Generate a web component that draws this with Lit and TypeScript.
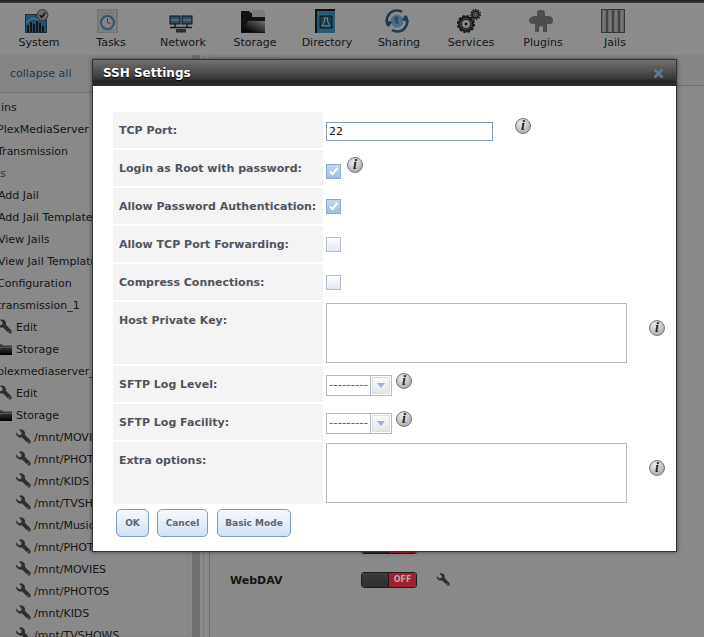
import { LitElement, html, css, svg } from "lit";
import { customElement } from "lit/decorators.js";

const wrench = (size: number) => html`<svg class="tico" width=${size} height=${size} viewBox="0 0 16 16">
  <path d="M1 3.600 3.900 6.300 6.200 5.700 6.700 3.400 4 .8C5.800 0 7.800.4 9 1.700c1 1.100 1.300 2.700.8 4.100l5.200 5.300c.9.9.9 2 .2 2.800-.8.8-2 .7-2.800-.1L7 8.500c-1.600.4-3.300 0-4.600-1.200C1.200 6.200.7 4.900 1 3.600z" fill="#555"/>
  <circle cx="13.200" cy="12.700" r="1" fill="#aaa"/></svg>`;

const folder = html`<svg class="tico" width="16" height="12" viewBox="0 0 16 12">
  <defs><linearGradient id="fg" x1="0" y1="0" x2="0" y2="1"><stop offset="0" stop-color="#888"/><stop offset="1" stop-color="#000"/></linearGradient></defs>
  <path d="M0 1h6l1 1.500h9V12H0z" fill="url(#fg)"/><path d="M0 10 3 4h13v1H5L2 11z" fill="#ddd" opacity=".5"/></svg>`;

type Row = { t: string; k: string };
const rows: Row[] = [
  { t: "ins", k: "first" }, { t: "PlexMediaServer", k: "plain" }, { t: "Transmission", k: "plain" },
  { t: "s", k: "link" }, { t: "Add Jail", k: "sub" }, { t: "Add Jail Templates", k: "sub" },
  { t: "View Jails", k: "sub" }, { t: "View Jail Templates", k: "sub" }, { t: "Configuration", k: "plain" },
  { t: "transmission_1", k: "plain" }, { t: "Edit", k: "edit" }, { t: "Storage", k: "store" },
  { t: "plexmediaserver_1", k: "plain" }, { t: "Edit", k: "edit" }, { t: "Storage", k: "store" },
  { t: "/mnt/MOVIES", k: "mnt" }, { t: "/mnt/PHOTOS", k: "mnt" }, { t: "/mnt/KIDS", k: "mnt" },
  { t: "/mnt/TVSHOWS", k: "mnt" }, { t: "/mnt/Music", k: "mnt" }, { t: "/mnt/PHOTOS", k: "mnt" },
  { t: "/mnt/MOVIES", k: "mnt" }, { t: "/mnt/PHOTOS", k: "mnt" }, { t: "/mnt/KIDS", k: "mnt" },
  { t: "/mnt/TVSHOWS", k: "mnt" },
];

const navIcons: Record<string, unknown> = {
  System: svg`<rect x=".5" y="5.500" width="21" height="18" fill="#3a9ad6" stroke="#33556e"/>
    <path d="M2 23v-7h2v7zM5 23v-10h2v10zM8 23v-8h2v8zM11 23v-11h2v11zM14 23v-9h2v9zM17 23v-6h2v6z" fill="#2a2a2a"/>
    <path d="M1 14 7 9l5 2 8-6" stroke="#cfe6f4" fill="none"/>
    <circle cx="17.500" cy="6" r="5.500" fill="#c4c4c4" stroke="#666"/>
    <path d="M14.700 6l2 2.200L20.300 3.800" stroke="#222" stroke-width="1.600" fill="none"/>`,
  Tasks: svg`<rect x="1" y="1" width="19" height="23" fill="#f0f0f0" stroke="#bbb"/>
    <path d="M4 4h13M4 7h13M4 21h13" stroke="#ccc"/>
    <circle cx="10.500" cy="13.500" r="6.500" fill="#f6f6f6" stroke="#5f9ccf" stroke-width="2.200"/>
    <path d="M10.500 9.500v4l3 1" stroke="#c45" fill="none"/>`,
  Network: svg`<rect x="1" y="7" width="10" height="8" fill="#4a8fbf" stroke="#222"/>
    <rect x="13" y="7" width="10" height="8" fill="#4a8fbf" stroke="#222"/>
    <path d="M2 11h8M14 11h8" stroke="#d4e6f2"/>
    <path d="M6 15v3M18 15v3M1 18.500h22" stroke="#333" stroke-width="1.500"/>
    <rect x="7" y="20" width="10" height="3.500" fill="#555"/>`,
  Storage: svg`<path d="M0 2h8l2 2h14v20H0z" fill="#222"/>
    <path d="M11 1h11l2 2v5H11z" fill="#e4e4e4"/>
    <path d="M1 23 7 12h17v11z" fill="url(#sg)"/>
    <defs><linearGradient id="sg" x1="0" y1="1" x2="1" y2="0"><stop offset=".2" stop-color="#111"/><stop offset="1" stop-color="#c8c8c8"/></linearGradient></defs>`,
  Directory: svg`<rect x="2" y="0" width="20" height="24" fill="#222"/>
    <rect x="4" y="2" width="18" height="22" fill="#4aa8d8"/>
    <rect x="7" y="7" width="12" height="12" fill="#2e7299" stroke="#222"/>
    <path d="M11.500 9v3l-2.500 5h8l-2.500-5V9M11 9h4" fill="none" stroke="#e8ffff" stroke-width="1"/>`,
  Sharing: svg`<circle cx="12" cy="12" r="6.500" fill="#92c6ee"/>
    <path d="M9 9l3-2 2 2-2 2 2 3-3 1-1-3z" fill="#4a8cc0"/>
    <path d="M3.500 17A10 10 0 0 1 12 1.500a10 10 0 0 1 5 1.300" fill="none" stroke="#376b9c" stroke-width="2.600"/>
    <path d="M20.500 7A10 10 0 0 1 12 22.500a10 10 0 0 1-5-1.300" fill="none" stroke="#376b9c" stroke-width="2.600"/>
    <path d="M0 11l4 7 3-5zM24 13l-4-7-3 5z" fill="#376b9c"/>`,
  Services: svg`<circle cx="9" cy="15" r="6" fill="none" stroke="#333" stroke-width="4"/>
    <circle cx="9" cy="15" r="7.800" fill="none" stroke="#333" stroke-width="2.600" stroke-dasharray="2.500 1.600"/>
    <circle cx="9" cy="15" r="5.500" fill="none" stroke="#888" stroke-width="1"/>
    <circle cx="9" cy="15" r="1.500" fill="#333"/>
    <circle cx="18.500" cy="5.500" r="3.500" fill="#888" stroke="#333" stroke-width="1.600"/>
    <circle cx="18.500" cy="5.500" r="4.800" fill="none" stroke="#333" stroke-width="1.500" stroke-dasharray="1.500 1.200"/>`,
  Plugins: svg`<path d="M8 4q0-3 3-3h2q3 0 3 3v3h3q5 0 5 4.500t-5 3.500h-1v8h-4v-4q0-2-2-2t-2 2v4H6v-8H5q-5 0-5-3.500T5 7h3z" fill="#8f8f8f"/>`,
  Jails: svg`<rect x=".5" y=".5" width="23" height="23" fill="#bdbdbd" stroke="#666"/>
    <path d="M6 1v22M12 1v22M18 1v22" stroke="#6a6a6a" stroke-width="1.500"/>
    <path d="M3 1v22M9 1v22M15 1v22M21 1v22" stroke="#eee" stroke-width="1"/>`,
};

@customElement("app-root")
export class AppRoot extends LitElement {
  static styles = css`
    :host { display: block; width: 704px; height: 637px; position: relative; overflow: hidden;
      background: #fff; font-family: "DejaVu Sans", Verdana, sans-serif; font-size: 11px; color: #2b2f36; }
    .topline { height: 3px; background: linear-gradient(#333, #777); }
    .nav { display: flex; height: 52px; padding-left: 2px; background: #fff; }
    .nav-item { width: 72px; display: flex; flex-direction: column; align-items: center; padding-top: 6px; box-sizing: border-box; color: #2b2f36; }
    .nav-item svg { display: block; width: 24px; height: 24px; margin-left: -2px; }
    .nav-item span { display: block; line-height: 14px; margin: 3px 0 0 2px; white-space: nowrap; }
    .content { display: flex; height: 582px; background: #f4f4f4; }
    .side { width: 188px; flex: none; overflow: hidden; }
    .collapse { height: 37px; line-height: 37px; padding-left: 10px; color: #3a6ea5; border-bottom: 1px solid #ccc; background: #f4f4f4; }
    .tree { padding-top: 3px; background: #fbfbfb; height: 540px; }
    .row { height: 22px; display: flex; align-items: center; white-space: nowrap; color: #2b2f36; }
    .row.first { margin-left: 1px; }
    .row.plain { margin-left: -3px; }
    .row.sub { margin-left: -2px; }
    .row.link { color: #3a6ea5; }
    .row.edit, .row.store { gap: 4px; margin-left: -4px; }
    .row.mnt { padding-left: 15px; gap: 3px; }
    .row .tico { flex: none; }
    .gutter { width: 22px; flex: none; display: flex; background: #fbfbfb; }
    .gutter i { display: block; flex: none; }
    .g0 { width: 1px; background: #f0f0f0; }
    .g1 { width: 3px; }
    .g2 { width: 8px; background: #cfcfcf; }
    .g3 { width: 3px; background: #fff; }
    .g4 { width: 1px; background: #ddd; }
    .g5 { width: 5px; }
    .g6 { width: 1px; background: #c8c8c8; }
    .main { flex: 1; }
    .tabs { height: 31px; box-sizing: border-box; border-bottom: 1px solid #ccc; padding-top: 2px; }
    .tab { width: 73px; height: 28px; box-sizing: border-box; border: 1px solid #e4e4e4; border-bottom: 0; border-radius: 4px 4px 0 0; background: #f8f8f8; }
    .pane { background: #fbfbfb; height: 551px; display: flex; flex-direction: column; justify-content: flex-end; gap: 18px; padding-bottom: 49px; box-sizing: border-box; }
    .svc { display: flex; align-items: center; height: 16px; padding-left: 20px; }
    .svc b { width: 131px; font-size: 11px; color: #2a2a2a; }
    .toggle { width: 56px; height: 16px; box-sizing: border-box; border: 1px solid #1c1c1c; border-radius: 3px; display: flex; overflow: hidden; margin-right: 19px; position: relative; z-index: 1; }
    .toggle i { flex: 1; background: linear-gradient(#3a3a3a, #2e2e2e); border-right: 1px solid #1c1c1c; }
    .toggle span { width: 27px; background: #a21f30; color: #b5aaaa; font-size: 8px; font-weight: bold; text-align: center; line-height: 14px; }
    .overlay { position: absolute; inset: 0; background: rgba(0,0,0,.455); }
    .dialog { position: absolute; z-index: 2; left: 92px; top: 59px; width: 585px; height: 493px; box-sizing: border-box; border: 1px solid #333; background: #fff; box-shadow: 0 0 4px rgba(0,0,0,.5); display: flex; flex-direction: column; color: #4f545e; }
    .title { height: 26px; flex: none; box-sizing: border-box; background: linear-gradient(#717171 0, #3a3a3a 70%, #242424 82%, #2c2c2c 100%); display: flex; align-items: center; justify-content: space-between; padding: 0 12px 0 10px; color: #fff; font-weight: bold; font-size: 12px; text-shadow: 0 1px 1px #000; }
    .title svg { display: block; }
    .form { display: grid; grid-template-columns: 210px 1fr; column-gap: 3px; row-gap: 2px; margin: 26px 0 0 20px; }
    .lab { background: #f4f4f4; min-height: 36px; box-sizing: border-box; padding: 12px 6px 0; font-weight: bold; line-height: 14px; white-space: nowrap; }
    .val { display: flex; align-items: flex-start; }
    .input { width: 167px; height: 19px; box-sizing: border-box; border: 1px solid #7f9db9; margin-top: 10px; padding: 0 2px; font-size: 11px; line-height: 18px; color: #111; }
    .area { width: 301px; height: 60px; box-sizing: border-box; border: 1px solid #b5bac6; margin: 1px 0; background: #fff; }
    .cb { width: 15px; height: 15px; box-sizing: border-box; border: 1px solid #b3bdcf; margin-top: 11px; background: linear-gradient(#fff, #dfe7f5); display: block; }
    .cb.on { border-color: #8fa9cb; background: linear-gradient(#c4d7ef, #a0bde3); }
    .cb.low { margin-top: 14px; }
    .cb svg { display: block; }
    .sel { width: 66px; height: 21px; box-sizing: border-box; border: 1px solid #b5bac6; margin-top: 9px; display: flex; background: #fff; }
    .sel span { flex: 1; font-size: 12px; line-height: 18px; padding-left: 2px; color: #666; overflow: hidden; }
    .sel i { width: 21px; flex: none; box-sizing: border-box; border-left: 1px solid #b5bac6; background: #fff; padding: 1px; display: block; }
    .sel i b { display: flex; align-items: center; justify-content: center; height: 17px; box-sizing: border-box; border: 1px solid #ddd; background: linear-gradient(#fafafa,#e6e6e6); }
    .info { width: 16px; height: 16px; box-sizing: border-box; border: 1px solid #777; border-radius: 50%; flex: none; background: radial-gradient(circle at 40% 30%, #f0f0f0, #aaa 80%); display: flex; align-items: center; justify-content: center; font: italic bold 14px/14px "Liberation Serif", serif; color: #222; }
    .i-input { margin: 6px 0 0 22px; }
    .i-cb { margin: 7px 0 0 6px; }
    .i-area { margin: 18px 0 0 22px; }
    .i-sel { margin: 7px 0 0 4px; }
    .actions { display: flex; margin: 5px 0 0 23px; }
    .btn { height: 28px; box-sizing: border-box; border: 1px solid #7d9cc2; border-radius: 5px; background: linear-gradient(#f7f9fd, #cfe0f6); color: #5f646d; font-weight: bold; font-size: 9px; display: flex; align-items: center; justify-content: center; }
    .b-ok { width: 33px; margin-right: 8px; }
    .b-cancel { width: 51px; margin-right: 9px; }
    .b-basic { width: 74px; }
  `;

  private info(cls: string) { return html`<span class="info ${cls}">i</span>`; }
  private cb(on: boolean, low = false) {
    return html`<span class="cb ${on ? "on" : ""} ${low ? "low" : ""}">${on ? html`<svg width="13" height="13" viewBox="0 0 13 13"><path d="M3 6.500l2.500 2.500L10.500 3" fill="none" stroke="#fff" stroke-width="2"/></svg>` : ""}</span>`;
  }
  private sel() {
    return html`<span class="sel"><span>---------</span><i><b><svg width="8" height="5" viewBox="0 0 8 5"><path d="M0 0h8L4 5z" fill="#9db2d8"/></svg></b></i></span>`;
  }
  private svc(name: string) {
    return html`<div class="svc"><b>${name}</b><span class="toggle"><i></i><span>OFF</span></span>${wrench(14)}</div>`;
  }

  render() {
    return html`
      <div class="topline"></div>
      <div class="nav">
        ${Object.keys(navIcons).map((n) => html`<div class="nav-item"><svg viewBox="0 0 24 24">${navIcons[n]}</svg><span>${n}</span></div>`)}
      </div>
      <div class="content">
        <div class="side">
          <div class="collapse">collapse all</div>
          <div class="tree">
            ${rows.map((r) => html`<div class="row ${r.k}">
              ${r.k === "edit" || r.k === "mnt" ? wrench(16) : r.k === "store" ? folder : ""}<span>${r.t}</span></div>`)}
          </div>
        </div>
        <div class="gutter"><i class="g0"></i><i class="g1"></i><i class="g2"></i><i class="g3"></i><i class="g4"></i><i class="g5"></i><i class="g6"></i></div>
        <div class="main">
          <div class="tabs"><div class="tab"></div></div>
          <div class="pane">
            ${this.svc("UPS")}
            ${this.svc("WebDAV")}
          </div>
        </div>
      </div>
      <div class="overlay"></div>
      <div class="dialog">
        <div class="title"><span>SSH Settings</span>
          <svg width="11" height="11" viewBox="0 0 11 11"><path d="M1.500 1.500l8 8M9.500 1.500l-8 8" stroke="#5e7690" stroke-width="3"/></svg></div>
        <div class="form">
          <div class="lab">TCP Port:</div><div class="val"><div class="input">22</div>${this.info("i-input")}</div>
          <div class="lab">Login as Root with password:</div><div class="val">${this.cb(true, true)}${this.info("i-cb")}</div>
          <div class="lab">Allow Password Authentication:</div><div class="val">${this.cb(true)}</div>
          <div class="lab">Allow TCP Port Forwarding:</div><div class="val">${this.cb(false)}</div>
          <div class="lab">Compress Connections:</div><div class="val">${this.cb(false)}</div>
          <div class="lab">Host Private Key:</div><div class="val"><div class="area"></div>${this.info("i-area")}</div>
          <div class="lab">SFTP Log Level:</div><div class="val">${this.sel()}${this.info("i-sel")}</div>
          <div class="lab">SFTP Log Facility:</div><div class="val">${this.sel()}${this.info("i-sel")}</div>
          <div class="lab">Extra options:</div><div class="val"><div class="area"></div>${this.info("i-area")}</div>
        </div>
        <div class="actions">
          <div class="btn b-ok">OK</div><div class="btn b-cancel">Cancel</div><div class="btn b-basic">Basic Mode</div>
        </div>
      </div>
    `;
  }
}
